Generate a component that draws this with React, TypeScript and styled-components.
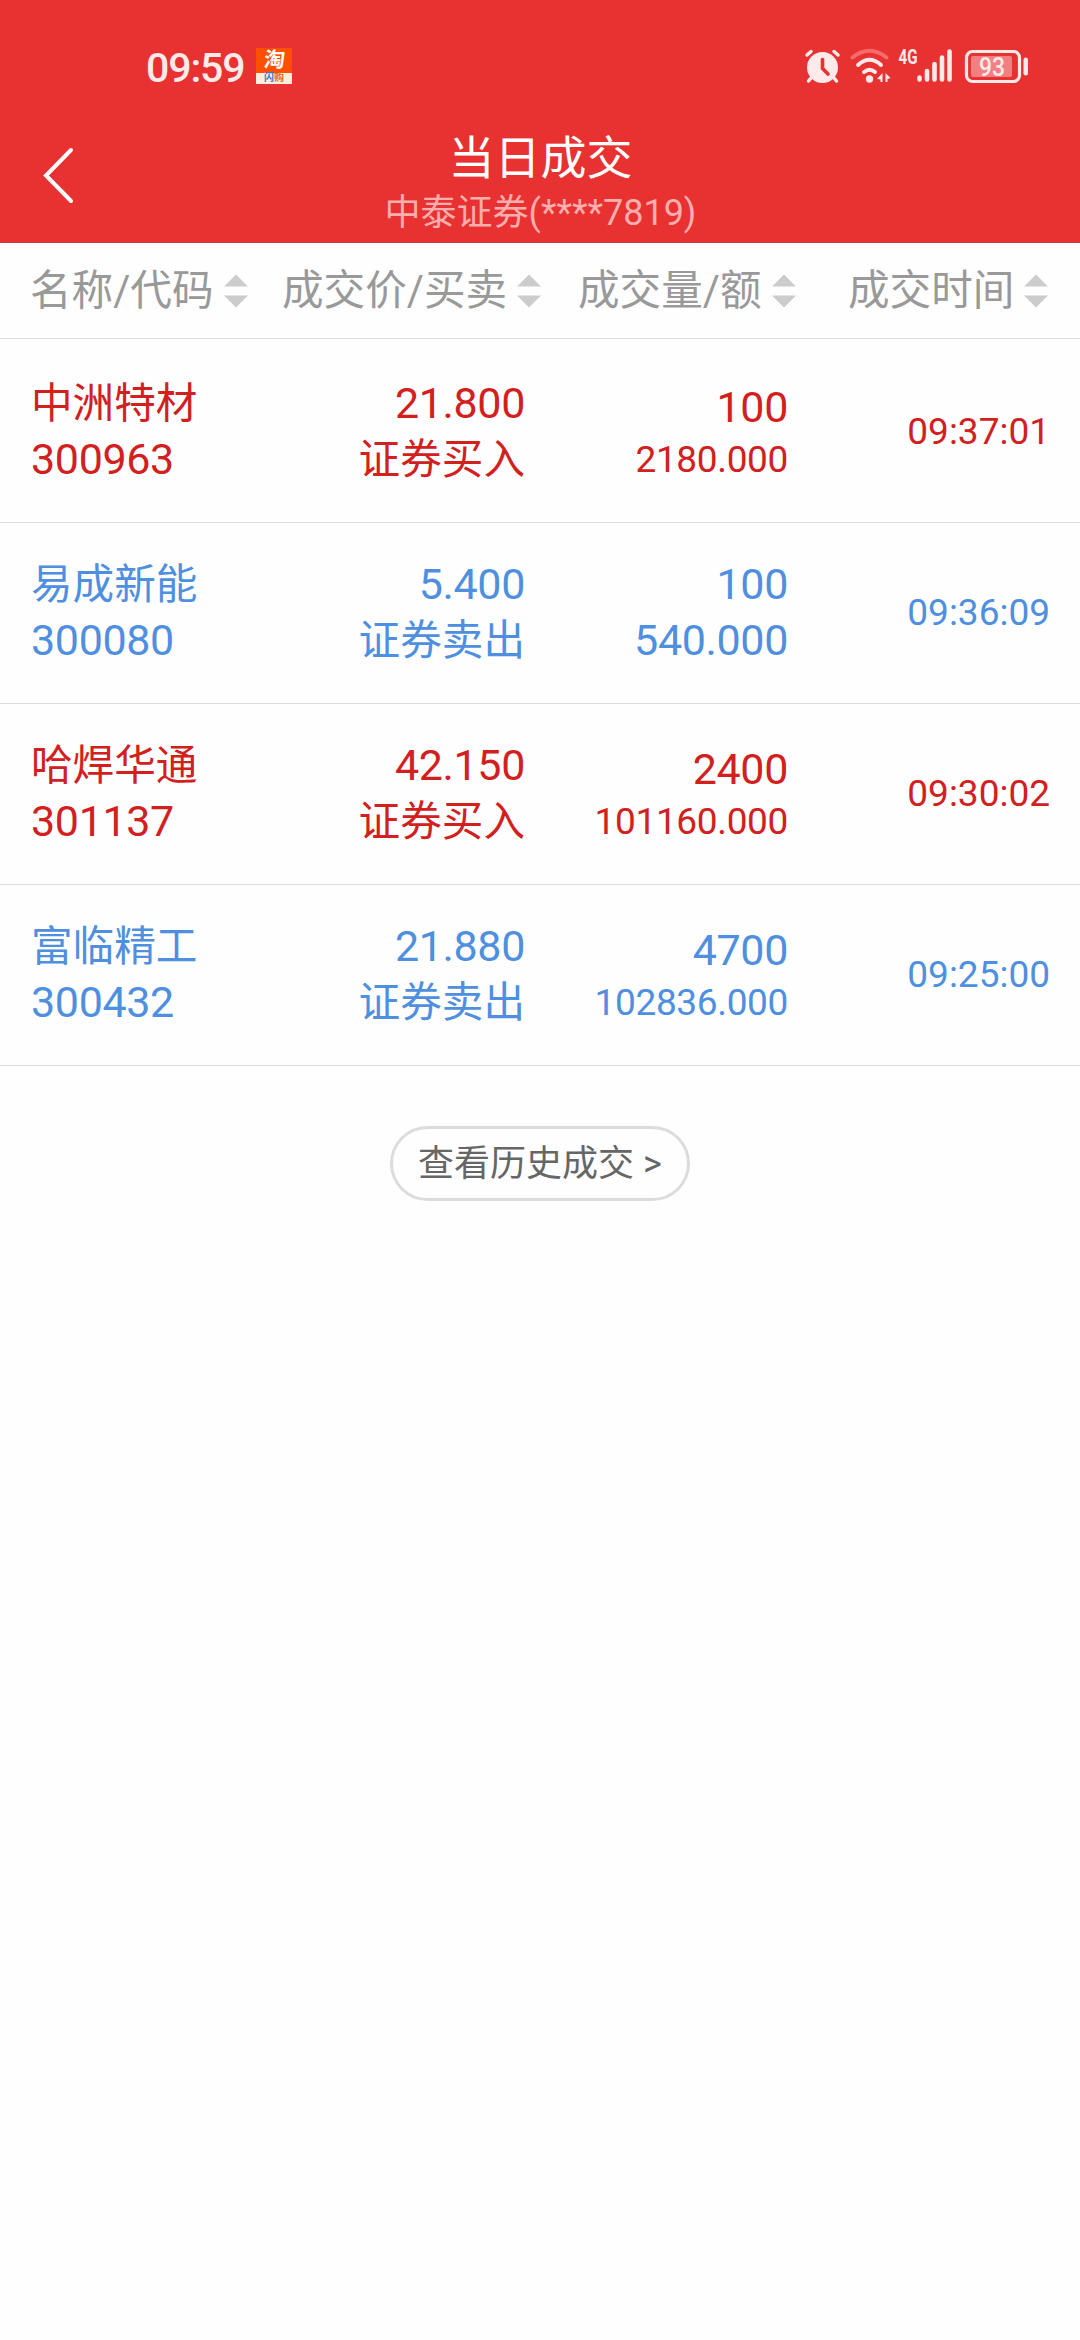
import React from "react";
import styled, { createGlobalStyle } from "styled-components";

const Global = createGlobalStyle`
  * { box-sizing: border-box; }
  body { margin: 0; background: #fefefe; font-family: Roboto, "Noto Sans CJK SC", sans-serif; }
`;

const Screen = styled.div`
  width: 1080px;
  min-height: 2340px;
  background: #fefefe;
`;

const Header = styled.header`
  height: 243px;
  background: #e83131;
  border-bottom: 1px solid #c23a3a;
  color: #fff;
`;

const StatusBar = styled.div`
  height: 132px;
  padding: 0 51px 0 146px;
  display: flex;
  align-items: center;
  color: #ffe9e9;
`;

const Clock = styled.span`
  width: 100px;
  padding-top: 3px;
  font-size: 41px;
  line-height: 48px;
  font-weight: 500;
  letter-spacing: -1.1px;
  white-space: nowrap;
`;

const AppBadge = styled.div`
  width: 36px;
  height: 36px;
  margin-left: 10px;
  background: #ff5000;
  display: flex;
  flex-direction: column;
  align-items: center;
  overflow: hidden;
`;

const BadgeTop = styled.span`
  height: 25px;
  font-size: 21px;
  line-height: 25px;
  font-weight: 700;
  color: #fff;
  transform: skewX(-6deg);
`;

const BadgeBottom = styled.span`
  width: 36px;
  height: 11px;
  background: #ffeede;
  font-size: 10px;
  line-height: 10px;
  font-weight: 700;
  text-align: center;
  color: #e8641e;
`;

const BadgeAccent = styled.span`
  color: #3a78c8;
`;

const StatusIcons = styled.svg`
  margin-left: auto;
  display: block;
`;

const NavBar = styled.div`
  height: 110px;
  display: grid;
  grid-template-columns: 120px 1fr 120px;
`;

const BackButton = styled.button`
  border: 0;
  padding: 15px 0 0 42px;
  background: none;
  display: flex;
`;

const Titles = styled.div`
  display: flex;
  flex-direction: column;
  align-items: center;
  padding-left: 1px;
`;

const Title = styled.h1`
  margin: 0;
  font-size: 46px;
  line-height: 52px;
  font-weight: 400;
`;

const Subtitle = styled.div`
  font-size: 36px;
  line-height: 44px;
  margin-top: 7px;
  color: #ffaeae;
  white-space: nowrap;
`;

const HeadRow = styled.div`
  height: 96px;
  padding-left: 30px;
  border-bottom: 1px solid #dcdcdc;
  display: grid;
  grid-template-columns: 252px 296px 270px 1fr;
  align-items: center;
  color: #999;
  font-size: 41.6px;
`;

const HeadCell = styled.div`
  display: flex;
  align-items: center;
  gap: 10px;
  line-height: 60px;
  white-space: nowrap;
`;

const Row = styled.div<{ $side: "buy" | "sell"; $first: boolean }>`
  height: ${(p) => (p.$first ? 184 : 181)}px;
  padding: ${(p) => (p.$first ? 3 : 0)}px 31px 0;
  border-bottom: 1px solid #dcdcdc;
  display: grid;
  grid-template-columns: 250px 244px 263px 262px;
  align-items: center;
  color: ${(p) => (p.$side === "buy" ? "#d2201f" : "#4f8fe0")};
`;

const Cell = styled.div<{ $end?: boolean }>`
  display: flex;
  flex-direction: column;
  align-items: ${(p) => (p.$end ? "flex-end" : "flex-start")};
`;

const Label = styled.span`
  font-size: 41.6px;
  line-height: 56px;
`;

const Figure = styled.span<{ $small?: boolean }>`
  margin: -1px 0 1px;
  font-size: ${(p) => (p.$small ? 37 : 43)}px;
  line-height: ${(p) => (p.$small ? 49 : 56)}px;
  letter-spacing: -0.35px;
`;

const Time = styled(Figure)`
  letter-spacing: 0;
`;

const Footer = styled.div`
  padding-top: 60px;
  display: flex;
  justify-content: center;
`;

const HistoryButton = styled.button`
  width: 300px;
  height: 75px;
  padding: 1px 0 0;
  border: 3px solid #dcdcdc;
  border-radius: 38px;
  background: none;
  color: #666;
  font-family: inherit;
  font-size: 36px;
  line-height: 66px;
  white-space: nowrap;
`;

const SortIcon = () => (
  <svg width="24" height="34" viewBox="0 0 24 34">
    <path d="M12 0.5 24 12.5H0Z M0 21.5H24L12 33.5Z" fill="#ccc" />
  </svg>
);

const heads = ["名称/代码", "成交价/买卖", "成交量/额", "成交时间"];

type Deal = {
  name: string; code: string; price: string; side: "buy" | "sell";
  volume: string; amount: string; time: string;
};

const deals: Deal[] = [
  { name: "中洲特材", code: "300963", price: "21.800", side: "buy", volume: "100", amount: "2180.000", time: "09:37:01" },
  { name: "易成新能", code: "300080", price: "5.400", side: "sell", volume: "100", amount: "540.000", time: "09:36:09" },
  { name: "哈焊华通", code: "301137", price: "42.150", side: "buy", volume: "2400", amount: "101160.000", time: "09:30:02" },
  { name: "富临精工", code: "300432", price: "21.880", side: "sell", volume: "4700", amount: "102836.000", time: "09:25:00" },
];

export default function App() {
  return (
    <Screen>
      <Global />
      <Header>
        <StatusBar>
          <Clock>09:59</Clock>
          <AppBadge>
            <BadgeTop>淘</BadgeTop>
            <BadgeBottom><BadgeAccent>闪</BadgeAccent>购</BadgeBottom>
          </AppBadge>
          <StatusIcons width="226" height="40" viewBox="803 46 226 40">
            <g fill="none" stroke="#ffe9e9" strokeLinecap="round">
              <circle cx="822.5" cy="67.5" r="15.5" fill="#ffe9e9" stroke="none" />
              <path d="M807 55 811 51.5M838 55 834 51.5M811 78 808.5 81M834 78 836.5 81" strokeWidth="3.5" />
              <path d="M822.5 59.5V68.5L828 74" stroke="#e83131" strokeWidth="3.6" />
              <path d="M852.5 57.5Q869.500 44 886.5 57.5" stroke="#f56a6a" strokeWidth="4" />
              <path d="M858 65Q869.500 54.500 881 65M864 72Q869.500 67.500 875 72" strokeWidth="4" />
            </g>
            <circle cx="869.5" cy="79" r="3.7" fill="#ffe9e9" />
            <path d="M882.500 73V82H880.500V79.500L877 79ZM885.500 73 890.500 78 887.500 79V82H885.500Z" fill="#ffe9e9" />
            <text x="898.500" y="64" fontFamily="Roboto, sans-serif" fontSize="20" fontWeight="700" textLength="19" lengthAdjust="spacingAndGlyphs" fill="#ffe9e9">4G</text>
            <path d="M919.500 77.500V79.500M927 71V79.500M934.500 64V79.500M942 57.500V79.500M949.500 51.500V79.500" stroke="#ffe9e9" strokeWidth="4.600" strokeLinecap="round" />
            <rect x="966.500" y="51.500" width="53" height="30" rx="6" fill="none" stroke="#ffe9e9" strokeWidth="3.200" />
            <rect x="971" y="56" width="41" height="21" rx="2" fill="#f38080" />
            <rect x="1023.500" y="57.500" width="4.500" height="18" rx="2.200" fill="#ffe9e9" />
            <text x="992" y="75.500" textAnchor="middle" fontFamily="Roboto, sans-serif" fontSize="25" fontWeight="500" textLength="26" lengthAdjust="spacingAndGlyphs" fill="#ffe9e9">93</text>
          </StatusIcons>
        </StatusBar>
        <NavBar>
          <BackButton>
            <svg width="33" height="58" viewBox="42 147 33 58">
              <path d="M71 150 46 175.500 71 201" fill="none" stroke="#fff" strokeWidth="4" strokeLinecap="round" />
            </svg>
          </BackButton>
          <Titles>
            <Title>当日成交</Title>
            <Subtitle>中泰证券(****7819)</Subtitle>
          </Titles>
        </NavBar>
      </Header>
      <HeadRow>
        {heads.map((h) => (
          <HeadCell key={h}>{h}<SortIcon /></HeadCell>
        ))}
      </HeadRow>
      {deals.map((d, i) => (
        <Row key={d.code} $side={d.side} $first={i === 0}>
          <Cell><Label>{d.name}</Label><Figure>{d.code}</Figure></Cell>
          <Cell $end><Figure>{d.price}</Figure><Label>{d.side === "buy" ? "证券买入" : "证券卖出"}</Label></Cell>
          <Cell $end><Figure>{d.volume}</Figure><Figure $small={d.amount.length > 7}>{d.amount}</Figure></Cell>
          <Cell $end><Time $small>{d.time}</Time></Cell>
        </Row>
      ))}
      <Footer>
        <HistoryButton>查看历史成交 &gt;</HistoryButton>
      </Footer>
    </Screen>
  );
}
